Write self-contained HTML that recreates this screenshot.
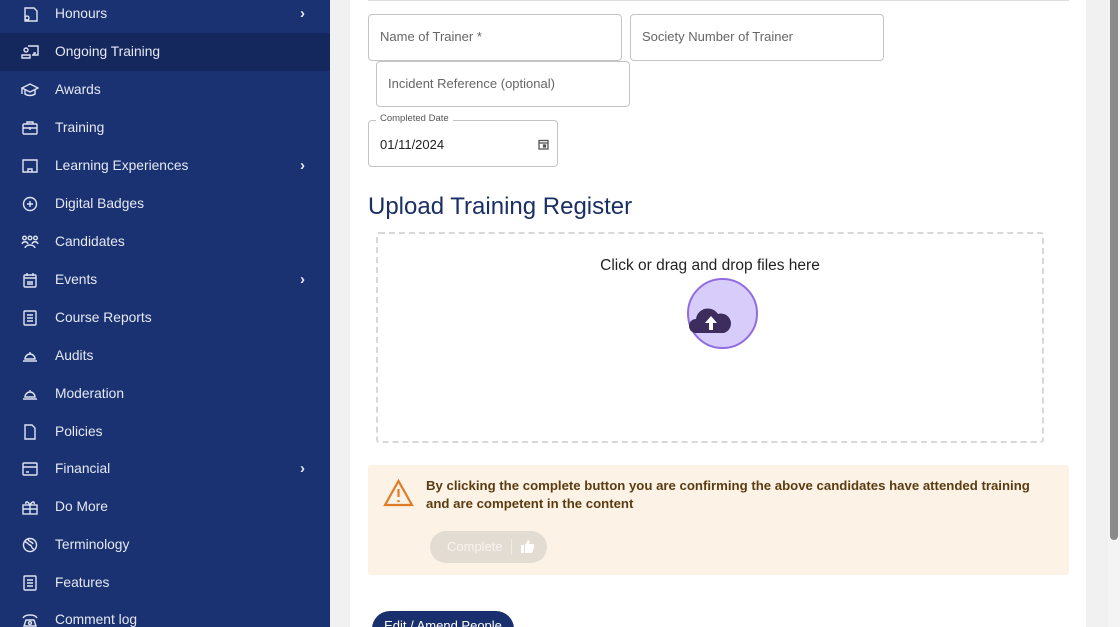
<!DOCTYPE html>
<html style="overflow:hidden;width:1120px;height:627px"><head><meta charset="utf-8"><style>
*{box-sizing:border-box;margin:0;padding:0}
body{width:1120px;height:627px;overflow:hidden;position:relative;background:#f1f1f1;font-family:"Liberation Sans",sans-serif}
#sb{position:absolute;left:0;top:0;width:330px;height:627px;background:#1a3172;overflow:hidden}
.it{position:absolute;left:0;width:330px;height:38px;color:#e6e9f2;font-size:13.8px;line-height:38px}
.it.act{background:#15285e}
.it .ic{position:absolute;left:21px;top:11px;width:18px;height:16px}
.it .tx{position:absolute;left:55px}
.it .ch{position:absolute;left:300px;top:0;font-size:15px;font-weight:bold}
#card{position:absolute;left:350px;top:0;width:736px;height:627px;background:#fff;overflow:hidden}
.inp{position:absolute;border:1px solid #c4c4c4;border-radius:4px;background:#fff;font-size:13px;color:#666;padding-left:11px;line-height:44px}
#sc{position:absolute;left:1108px;top:0;width:12px;height:627px;background:#f4f4f4}
#th{position:absolute;left:1110px;top:0;width:8px;height:540px;background:#8a8a8a;border-radius:0 0 4px 4px}
</style></head><body>
<div id="sb">
<div class="it" style="top:-5px"><svg class="ic" viewBox="0 0 18 16" fill="none" stroke="#dfe4f0" stroke-width="1.4"><path d="M4 2h9l3 3v10H4z M6 10a2 2 0 1 0 0.1 0 M4 14h4"/></svg><span class="tx">Honours</span><span class="ch">›</span></div>
<div class="it act" style="top:33px"><svg class="ic" viewBox="0 0 18 16" fill="none" stroke="#dfe4f0" stroke-width="1.4"><circle cx="5" cy="6" r="2"/><path d="M1 14h8v-3H1z M7 2h10v9h-6 M13 11v-2h2"/></svg><span class="tx">Ongoing Training</span></div>
<div class="it" style="top:71px"><svg class="ic" viewBox="0 0 18 16" fill="none" stroke="#dfe4f0" stroke-width="1.4"><path d="M1 6l8-4 8 4-8 4z M4 8v4c3 2 7 2 10 0V8 M1 6v6"/></svg><span class="tx">Awards</span></div>
<div class="it" style="top:109px"><svg class="ic" viewBox="0 0 18 16" fill="none" stroke="#dfe4f0" stroke-width="1.4"><rect x="2" y="4" width="14" height="10" rx="1"/><path d="M6 4V2h6v2 M2 8h14 M9 7v3"/></svg><span class="tx">Training</span></div>
<div class="it" style="top:147px"><svg class="ic" viewBox="0 0 18 16" fill="none" stroke="#dfe4f0" stroke-width="1.4"><path d="M2 2h14v12H2z M7 14v-3h4v3"/></svg><span class="tx">Learning Experiences</span><span class="ch">›</span></div>
<div class="it" style="top:185px"><svg class="ic" viewBox="0 0 18 16" fill="none" stroke="#dfe4f0" stroke-width="1.4"><circle cx="9" cy="8" r="6.5"/><path d="M9 5v6M6 8h6"/></svg><span class="tx">Digital Badges</span></div>
<div class="it" style="top:223px"><svg class="ic" viewBox="0 0 18 16" fill="none" stroke="#dfe4f0" stroke-width="1.4"><circle cx="3.5" cy="4" r="1.8"/><circle cx="9" cy="4" r="1.8"/><circle cx="14.5" cy="4" r="1.8"/><path d="M1 10c1-3 5-3 6 0M11 10c1-3 5-3 6 0M4 14c1-4 9-4 10 0"/></svg><span class="tx">Candidates</span></div>
<div class="it" style="top:261px"><svg class="ic" viewBox="0 0 18 16" fill="none" stroke="#dfe4f0" stroke-width="1.4"><rect x="3" y="3" width="12" height="12" rx="1"/><path d="M6 1v3M12 1v3M3 6h12M6 10h6M6 12h6"/></svg><span class="tx">Events</span><span class="ch">›</span></div>
<div class="it" style="top:299px"><svg class="ic" viewBox="0 0 18 16" fill="none" stroke="#dfe4f0" stroke-width="1.4"><rect x="3" y="1" width="12" height="14" rx="1"/><path d="M6 5h6M6 8h6M6 11h6"/></svg><span class="tx">Course Reports</span></div>
<div class="it" style="top:337px"><svg class="ic" viewBox="0 0 18 16" fill="none" stroke="#dfe4f0" stroke-width="1.4"><path d="M2 13h14 M4 11a5 5 0 0 1 10 0z M9 6V4"/></svg><span class="tx">Audits</span></div>
<div class="it" style="top:375px"><svg class="ic" viewBox="0 0 18 16" fill="none" stroke="#dfe4f0" stroke-width="1.4"><path d="M2 13h14 M4 11a5 5 0 0 1 10 0z M9 6V4"/></svg><span class="tx">Moderation</span></div>
<div class="it" style="top:413px"><svg class="ic" viewBox="0 0 18 16" fill="none" stroke="#dfe4f0" stroke-width="1.4"><path d="M4 1h7l3 3v11H4z"/></svg><span class="tx">Policies</span></div>
<div class="it" style="top:450px"><svg class="ic" viewBox="0 0 18 16" fill="none" stroke="#dfe4f0" stroke-width="1.4"><rect x="2" y="2" width="14" height="12" rx="1"/><path d="M2 6h14M5 11h3"/></svg><span class="tx">Financial</span><span class="ch">›</span></div>
<div class="it" style="top:488px"><svg class="ic" viewBox="0 0 18 16" fill="none" stroke="#dfe4f0" stroke-width="1.4"><rect x="2" y="6" width="14" height="9"/><path d="M9 6v9M2 10h14M9 6c-2-4-5-4-4-1M9 6c2-4 5-4 4-1"/></svg><span class="tx">Do More</span></div>
<div class="it" style="top:526px"><svg class="ic" viewBox="0 0 18 16" fill="none" stroke="#dfe4f0" stroke-width="1.4"><circle cx="9" cy="8" r="6.5"/><path d="M4 5c3 0 3 3 5 3s1 4 4 4M7 2c0 3 4 2 5 5"/></svg><span class="tx">Terminology</span></div>
<div class="it" style="top:564px"><svg class="ic" viewBox="0 0 18 16" fill="none" stroke="#dfe4f0" stroke-width="1.4"><rect x="3" y="1" width="12" height="14" rx="1"/><path d="M6 5h6M6 8h6M6 11h6"/></svg><span class="tx">Features</span></div>
<div class="it" style="top:601px"><svg class="ic" viewBox="0 0 18 16" fill="none" stroke="#dfe4f0" stroke-width="1.4"><path d="M2 6c2-4 12-4 14 0 M5 8h8l2 6H3z"/><circle cx="9" cy="11" r="1.5"/></svg><span class="tx">Comment log</span></div>
</div>
<div id="card">
<div style="position:absolute;left:18px;top:0;width:701px;height:1px;background:#ddd"></div>
<div class="inp" style="left:18px;top:14px;width:254px;height:47px">Name of Trainer *</div>
<div class="inp" style="left:280px;top:14px;width:254px;height:47px">Society Number of Trainer</div>
<div class="inp" style="left:26px;top:61px;width:254px;height:46px">Incident Reference (optional)</div>
<div class="inp" style="left:18px;top:120px;width:190px;height:47px;color:#222;line-height:48px">01/11/2024
<svg style="position:absolute;left:169px;top:18px" width="11" height="11" viewBox="0 0 11 11" fill="none" stroke="#555" stroke-width="1.3"><rect x="1" y="1.5" width="9" height="8.5"/><path d="M1 4h9" /><rect x="5.5" y="6" width="2" height="2" fill="#555"/></svg></div>
<div style="position:absolute;left:26px;top:113px;background:#fff;padding:0 4px;font-size:9.5px;color:#555">Completed Date</div>
<div style="position:absolute;left:18px;top:193px;font-size:24px;color:#1a2f66">Upload Training Register</div>
<div style="position:absolute;left:26px;top:232px;width:668px;height:211px;border:2px dashed #d8d8d8;border-radius:3px"></div>
<div style="position:absolute;left:26px;top:257px;width:668px;text-align:center;font-size:15.5px;color:#222">Click or drag and drop files here</div>
<div style="position:absolute;left:337px;top:278px;width:71px;height:71px;border-radius:50%;background:#d8ccfa;border:2px solid #8f6de0"></div>
<svg style="position:absolute;left:338px;top:303px" width="44" height="32" viewBox="0 0 44 32"><path d="M8 30a7 7 0 0 1 0-14a12 12 0 0 1 22-5a9 9 0 0 1 6 19z" fill="#3d2d5e"/><path d="M21 27v-7h-4l6-7 6 7h-4v7z" fill="#fff"/></svg>
<div style="position:absolute;left:18px;top:465px;width:701px;height:110px;background:#fdf2e6;border-radius:3px"></div>
<svg style="position:absolute;left:33px;top:478px" width="31" height="30" viewBox="0 0 31 30" fill="none" stroke="#e07b28" stroke-width="2.2"><path d="M15.5 3L2 27h27z"/><path d="M15.5 11v8M15.5 22v2"/></svg>
<div style="position:absolute;left:76px;top:477px;width:630px;font-size:13.2px;font-weight:bold;color:#5a3c10;line-height:18px">By clicking the complete button you are confirming the above candidates have attended training and are competent in the content</div>
<div style="position:absolute;left:80px;top:531px;width:117px;height:32px;border-radius:16px;background:#e3dcd3;color:#f7f3ee;font-size:13px;line-height:32px;padding-left:17px">Complete<span style="position:absolute;left:81px;top:8px;width:1px;height:16px;background:#f0ebe4"></span>
<svg style="position:absolute;left:91px;top:9px" width="14" height="13" viewBox="0 0 14 13" fill="#fff"><rect x="0" y="5" width="3" height="8"/><path d="M4 5l3-5c2 0 2 2 1 4h5v3l-2 6H4z"/></svg></div>
<div style="position:absolute;left:22px;top:611px;width:142px;height:36px;border-radius:18px;background:#1a2f6e;color:#fff;font-size:13px;text-align:center;line-height:30px">Edit / Amend People</div>
</div>
<div id="sc"></div><div id="th"></div>
</body></html>
